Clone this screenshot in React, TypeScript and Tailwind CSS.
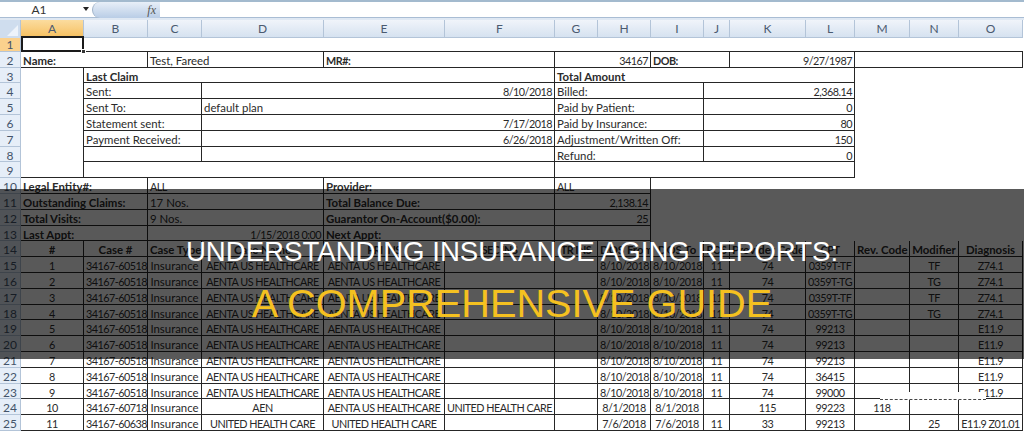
import React from "react";

type Cell = { t?: string; s?: number; a?: "l" | "r" | "c"; b?: boolean; open?: boolean; noLine?: boolean };

const SPANS: Record<number, string> = {
  1: "col-span-1",
  2: "col-span-2",
  3: "col-span-3",
  4: "col-span-4",
  5: "col-span-5",
  6: "col-span-6",
};

const GRID = "grid grid-cols-[21px_63px_64px_54px_122px_121px_110px_43px_53px_53px_26px_76px_49px_55px_49px_64px_1px]";

const COLS = ["A", "B", "C", "D", "E", "F", "G", "H", "I", "J", "K", "L", "M", "N", "O"];

const AENTA = "AENTA US HEALTHCARE";

const claimRow = (num: string, case_: string, d: string, e: string, f: string, from: string, to: string, pos: string, prov: string, cpt: string, mod: string, diag: string, rev = ""): Cell[] => [
  { t: num, a: "c" },
  { t: case_, a: "c" },
  { t: "Insurance", a: "c" },
  { t: d, a: "c" },
  { t: e, a: "c" },
  { t: f, a: "c" },
  {},
  { t: from, a: "c" },
  { t: to, a: "c" },
  { t: pos, a: "c" },
  { t: prov, a: "c" },
  { t: cpt, a: "c" },
  { t: rev, a: "c" },
  { t: mod, a: "c" },
  { t: diag, a: "c" },
];

const ROWS: Cell[][] = [
  [{ s: 1, noLine: true }],
  [
    { t: "Name:", s: 2, b: true },
    { t: "Test, Fareed", s: 2 },
    { t: "MR#:", s: 2, b: true },
    { t: "34167", s: 2, a: "r" },
    { t: "DOB:", s: 2, b: true },
    { t: "9/27/1987", s: 2, a: "r" },
    { s: 3 },
  ],
  [{ open: true }, { t: "Last Claim", s: 5, b: true }, { t: "Total Amount", s: 6, b: true }],
  [{ open: true }, { t: "Sent:", s: 2 }, { t: "8/10/2018", s: 3, a: "r" }, { t: "Billed:", s: 3 }, { t: "2,368.14", s: 3, a: "r" }],
  [{ open: true }, { t: "Sent To:", s: 2 }, { t: "default plan", s: 3 }, { t: "Paid by Patient:", s: 3 }, { t: "0", s: 3, a: "r" }],
  [{ open: true }, { t: "Statement sent:", s: 2 }, { t: "7/17/2018", s: 3, a: "r" }, { t: "Paid by Insurance:", s: 3 }, { t: "80", s: 3, a: "r" }],
  [{ open: true }, { t: "Payment Received:", s: 2 }, { t: "6/26/2018", s: 3, a: "r" }, { t: "Adjustment/Written Off:", s: 3 }, { t: "150", s: 3, a: "r" }],
  [{ open: true }, { s: 2 }, { s: 3 }, { t: "Refund:", s: 3 }, { t: "0", s: 3, a: "r" }],
  [{}, { s: 5 }, { s: 6 }],
  [{ t: "Legal Entity#:", s: 2, b: true }, { t: "ALL", s: 2 }, { t: "Provider:", s: 2, b: true }, { t: "ALL", s: 2 }],
  [{ t: "Outstanding Claims:", s: 2, b: true }, { t: "17 Nos.", s: 2 }, { t: "Total Balance Due:", s: 2, b: true }, { t: "2,138.14", s: 2, a: "r" }],
  [{ t: "Total Visits:", s: 2, b: true }, { t: "9 Nos.", s: 2 }, { t: "Guarantor On-Account($0.00):", s: 2, b: true }, { t: "25", s: 2, a: "r" }],
  [{ t: "Last Appt:", s: 2, b: true }, { t: "1/15/2018 0:00", s: 2, a: "r" }, { t: "Next Appt:", s: 2, b: true }, { s: 2 }],
  [
    { t: "#", a: "c", b: true },
    { t: "Case #", a: "c", b: true },
    { t: "Case Type", b: true },
    { t: "Case Name", a: "c", b: true },
    { t: "PRI INS", a: "c", b: true },
    { t: "SEC INS", a: "c", b: true },
    { t: "TR INS", a: "c", b: true },
    { t: "DOS From", a: "c", b: true },
    { t: "DOS To", a: "c", b: true },
    { t: "POS", a: "c", b: true },
    { t: "Provider Code", a: "c", b: true },
    { t: "CPT", a: "c", b: true },
    { t: "Rev. Code", a: "c", b: true },
    { t: "Modifier", a: "c", b: true },
    { t: "Diagnosis", a: "c", b: true },
  ],
  claimRow("1", "34167-60518", AENTA, AENTA, "", "8/10/2018", "8/10/2018", "11", "74", "0359T-TF", "TF", "Z74.1"),
  claimRow("2", "34167-60518", AENTA, AENTA, "", "8/10/2018", "8/10/2018", "11", "74", "0359T-TG", "TG", "Z74.1"),
  claimRow("3", "34167-60518", AENTA, AENTA, "", "8/10/2018", "8/10/2018", "11", "74", "0359T-TF", "TF", "Z74.1"),
  claimRow("4", "34167-60518", AENTA, AENTA, "", "8/10/2018", "8/10/2018", "11", "74", "0359T-TG", "TG", "Z74.1"),
  claimRow("5", "34167-60518", AENTA, AENTA, "", "8/10/2018", "8/10/2018", "11", "74", "99213", "", "E11.9"),
  claimRow("6", "34167-60518", AENTA, AENTA, "", "8/10/2018", "8/10/2018", "11", "74", "99213", "", "E11.9"),
  claimRow("7", "34167-60518", AENTA, AENTA, "", "8/10/2018", "8/10/2018", "11", "74", "99213", "", "E11.9"),
  claimRow("8", "34167-60518", AENTA, AENTA, "", "8/10/2018", "8/10/2018", "11", "74", "36415", "", "E11.9"),
  claimRow("9", "34167-60518", AENTA, AENTA, "", "8/10/2018", "8/10/2018", "11", "74", "99000", "", "E11.9"),
  claimRow("10", "34167-60718", "AEN", AENTA, "UNITED HEALTH CARE", "8/1/2018", "8/1/2018", "", "115", "99223", "", "", "118"),
  claimRow("11", "34167-60638", "UNITED HEALTH CARE", "UNITED HEALTH CARE", "", "7/6/2018", "7/6/2018", "11", "33", "99213", "25", "E11.9 Z01.01"),
];

// Lato's digits and capitals run wider than the sheet's font, so those values get squeezed
const isTight = (t?: string) => !!t && !/[a-z]/.test(t);

const SheetCell = ({ c }: { c: Cell }) => (
  <div
    className={`${SPANS[c.s ?? 1]} min-w-0 px-[2px] whitespace-nowrap overflow-hidden leading-[17px] ${c.noLine ? "" : "border-r border-[#262626]"} ${c.open || c.noLine ? "" : "border-b border-b-[#262626]"} ${c.a === "r" ? "text-right" : c.a === "c" ? "text-center" : "text-left"} ${c.b ? "font-bold" : ""} ${isTight(c.t) ? "text-[10.8px] tracking-[-0.5px]" : ""}`}
  >
    {c.t}
  </div>
);

export default function App() {
  return (
    <div className="relative w-[1024px] h-[432px] overflow-hidden bg-white font-['Lato','Liberation_Sans',sans-serif] text-[#2b2b2b] text-[11.4px]">
      {/* formula bar */}
      <div className="h-[2px] bg-[#a3bace]" />
      <div className="flex items-center h-[16px] bg-white border-b border-[#a9bdd4]">
        <div className="relative w-[92px] text-center pr-[14px] text-[12px] text-[#333]">
          A1
          <span className="absolute right-[3px] top-[6px] w-0 h-0 border-x-[3px] border-x-transparent border-t-[4px] border-t-[#222]" />
        </div>
        <div className="flex items-center justify-end w-[68px] h-[16px] pr-[4px] rounded-l-full border-l border-[#9fb2c8] bg-gradient-to-b from-[#e8eff8] to-[#b9cde6] font-['Liberation_Serif',serif] italic text-[12px] text-[#555]">
          fx
        </div>
      </div>
      <div className="h-[2px] bg-[#dfe8f3]" />

      {/* column headers */}
      <div className={`${GRID} h-[16px] text-center text-[#4a5a70] text-[12px] leading-[17px]`}>
        <div className="relative bg-[#cfddee] border-r border-[#b3c4d8]">
          <span className="absolute right-[2px] bottom-[2px] w-0 h-0 border-l-[11px] border-l-transparent border-b-[11px] border-b-[#eef3fa]" />
        </div>
        {COLS.map((c) => (
          <div
            key={c}
            className={`border-r border-b border-[#b3c4d8] bg-gradient-to-b ${c === "A" ? "from-[#fbdc9e] to-[#f6c05f]" : "from-[#f0f4fa] to-[#d6e2f0]"}`}
          >
            {c}
          </div>
        ))}
        <div />
      </div>

      {/* sheet rows */}
      {ROWS.map((row, i) => (
        <div key={i} className={`${GRID} h-[15.8px]`}>
          <div className={`text-center text-[12px] leading-[17px] overflow-hidden text-[#44546a] border-r border-b border-[#b3c4d8] ${i === 0 ? "bg-[#fbd18d]" : "bg-[#e6eef8]"}`}>
            {i + 1}
          </div>
          {row.map((c, j) => (
            <SheetCell key={j} c={c} />
          ))}
          {i === 0 && <div className="col-span-14 border-b border-[#262626]" />}
        </div>
      ))}

      {/* selected cell A1 */}
      <div className="absolute left-[21px] top-[36px] w-[63px] h-[16px] border-2 border-[#1a1a1a]">
        <span className="absolute -right-[4px] -bottom-[4px] w-[5px] h-[5px] bg-[#333] border border-white" />
      </div>

      {/* scrubbed patch over row 24 */}
      <div className="absolute left-[880px] top-[392px] w-[106px] h-[8px] bg-white border-b border-dashed border-[#444]" />

      {/* title band */}
      <div className="absolute inset-x-0 top-[189px] h-[170px] bg-black/65 flex flex-col items-center pt-[49px] font-['Liberation_Sans',sans-serif] leading-none">
        <div className="text-white text-[27.6px] h-[46px]">UNDERSTANDING INSURANCE AGING REPORTS:</div>
        <div className="text-[#f5c120] text-[39.7px]">A COMPREHENSIVE GUIDE</div>
      </div>
    </div>
  );
}
